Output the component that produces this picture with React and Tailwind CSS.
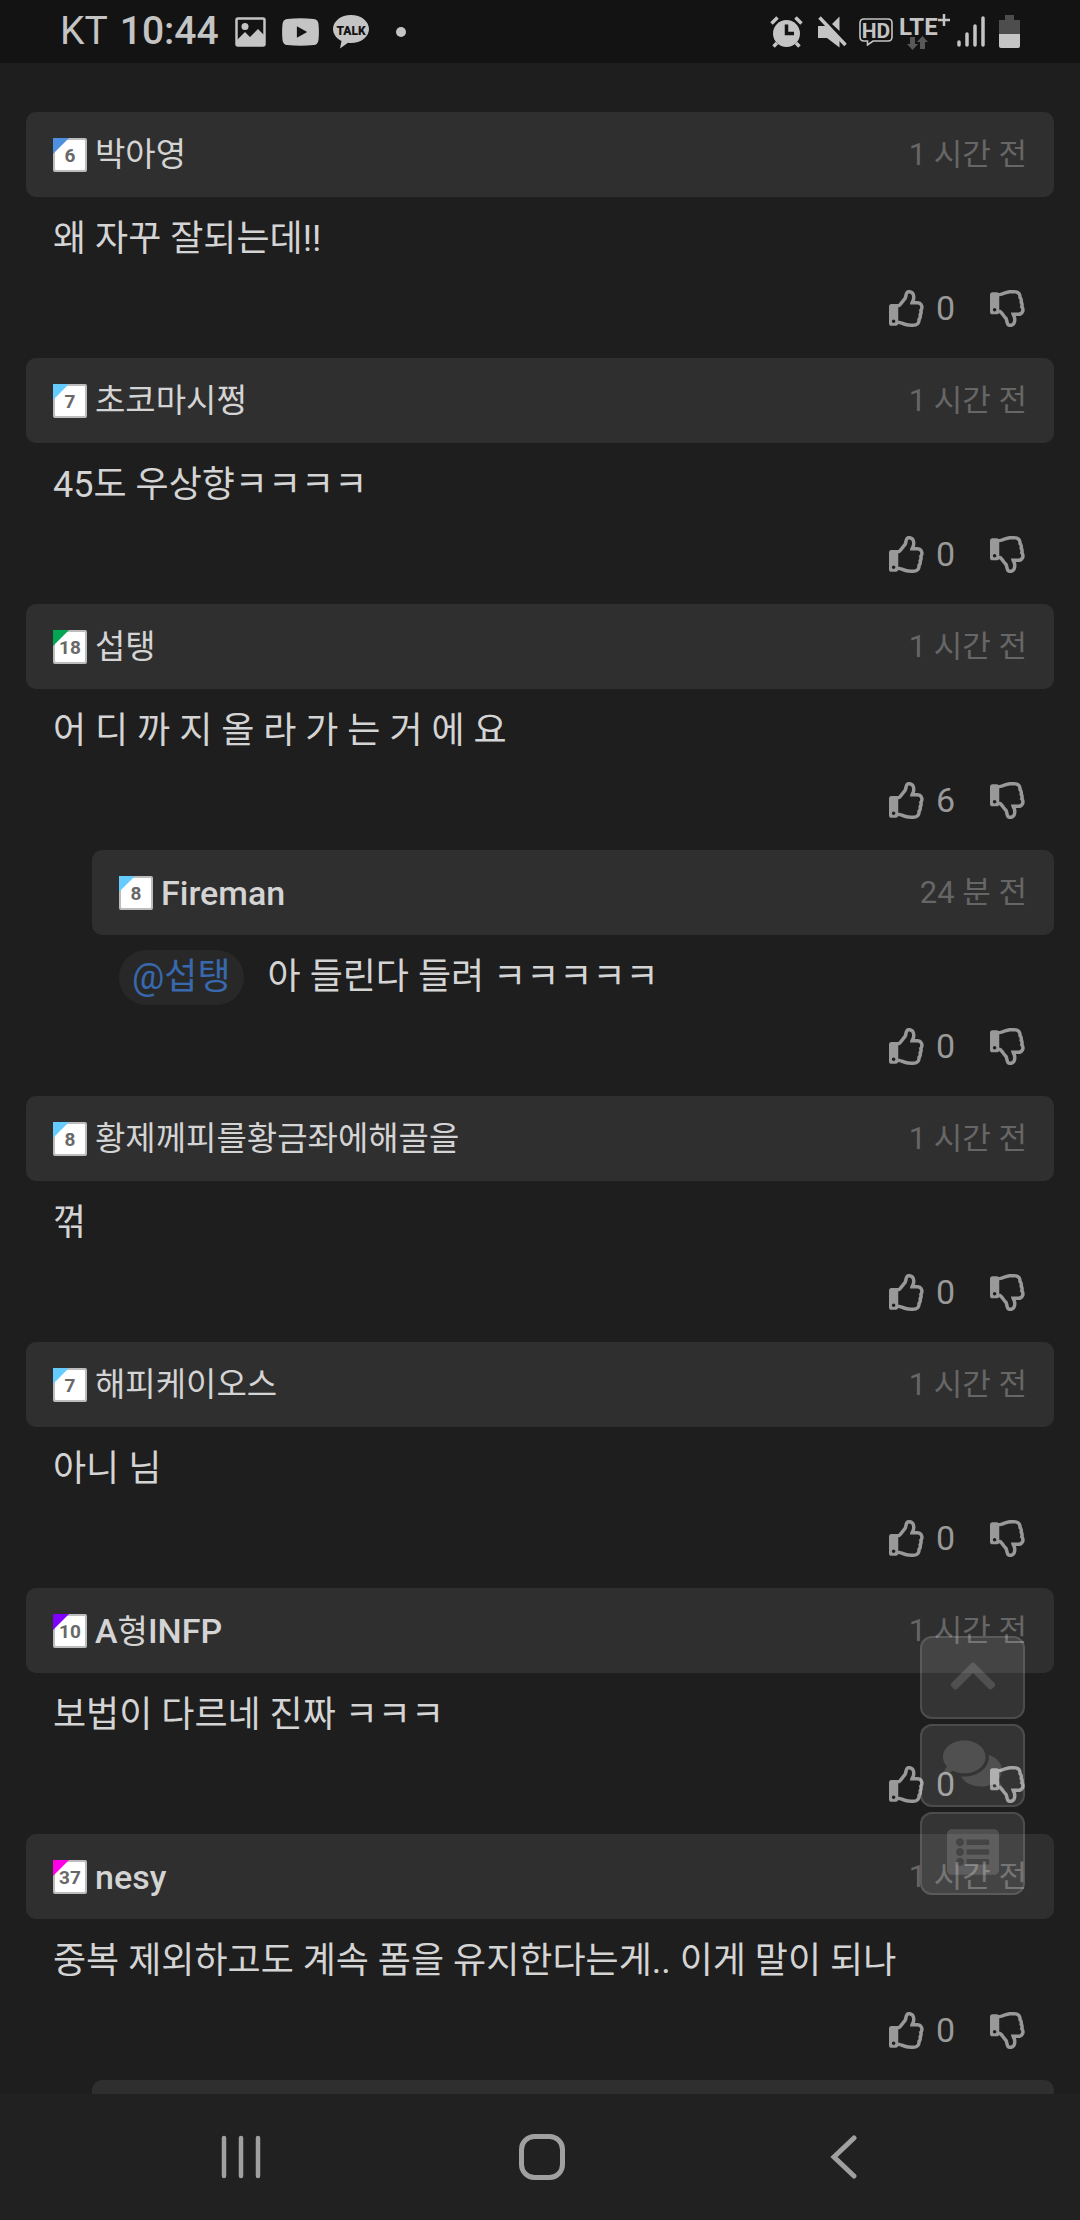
import React from "react";
import {
  FaChevronUp,
  FaComments,
  FaListAlt,
  FaRegThumbsDown,
  FaRegThumbsUp,
} from "react-icons/fa";

const comments = [
  { id: 1, level: 6, color: "#4f8fe0", author: "박아영", time: "1 시간 전", text: "왜 자꾸 잘되는데!!", likes: 0 },
  { id: 2, level: 7, color: "#66ccff", author: "초코마시쩡", time: "1 시간 전", text: "45도 우상향ㅋㅋㅋㅋ", likes: 0 },
  { id: 3, level: 18, color: "#00a651", author: "섭탱", time: "1 시간 전", text: "어 디 까 지 올 라 가 는 거 에 요", likes: 6 },
  { id: 4, level: 8, color: "#66ccff", author: "Fireman", time: "24 분 전", text: "아 들린다 들려 ㅋㅋㅋㅋㅋ", likes: 0, mention: "섭탱" },
  { id: 5, level: 8, color: "#66ccff", author: "황제께피를황금좌에해골을", time: "1 시간 전", text: "꺾", likes: 0 },
  { id: 6, level: 7, color: "#66ccff", author: "해피케이오스", time: "1 시간 전", text: "아니 님", likes: 0 },
  { id: 7, level: 10, color: "#8000ff", author: "A형INFP", time: "1 시간 전", text: "보법이 다르네 진짜 ㅋㅋㅋ", likes: 0 },
  { id: 8, level: 37, color: "#ff00e6", author: "nesy", time: "1 시간 전", text: "중복 제외하고도 계속 폼을 유지한다는게.. 이게 말이 되나", likes: 0 },
];

function StatusBar() {
  return (
    <header className="flex h-[63px] shrink-0 items-center justify-between bg-[#131313] px-[60px] text-[#c4c4c4]">
      <div className="flex items-center">
        <span className="text-[39px] leading-[63px]">KT</span>
        <span className="ml-3 text-[39px] leading-[63px] font-medium">10:44</span>
        <svg className="ml-4 h-[30px] w-[31px]" viewBox="0 0 31 30" fill="none">
          <rect x="1.5" y="1.5" width="28" height="27" rx="1.5" stroke="currentColor" strokeWidth="2.5" />
          <circle cx="10" cy="9.500" r="3.500" fill="currentColor" />
          <path d="M2 23l8-8 5 5 8-8 6 6v10H2z" fill="currentColor" />
        </svg>
        <svg className="ml-4 h-7 w-[37px]" viewBox="0 0 36 27">
          <path d="M5 .8Q18-.6 31 .8q4 .5 4.500 5 .8 7.700 0 15.400-.5 4.500-4.500 5-13 1.400-26 0-4-.5-4.500-5-.8-7.700 0-15.400Q1 1.300 5 .8z" fill="currentColor" />
          <path d="M14.500 8v11l10-5.500z" fill="#131313" />
        </svg>
        <svg className="ml-3.5 h-[34px] w-9" viewBox="0 0 36 34">
          <path d="M18 0c10 0 18 6.200 18 14s-8 14-18 14c-1 0-2 0-3-.2L7 33.500 8.500 26C3.500 23.500 0 19 0 14 0 6.200 8 0 18 0z" fill="currentColor" />
          <text x="18" y="19.500" textAnchor="middle" fontSize="12" fontWeight="900" fill="#131313">TALK</text>
        </svg>
        <span className="ml-[27px] size-2.5 rounded-full bg-[#c4c4c4]" />
      </div>

      <div className="flex items-center">
        <svg className="h-8 w-[33px]" viewBox="0 0 33 32" fill="none" stroke="currentColor">
          <circle cx="16.500" cy="17.500" r="13.500" fill="currentColor" stroke="none" />
          <path d="M1.500 7.500l6-6M31.500 7.500l-6-6M7 27l-3.500 3.500M26 27l3.500 3.500" strokeWidth="3.500" />
          <path d="M16.500 8.500v9H24" stroke="#131313" strokeWidth="3.500" />
        </svg>
        <svg className="ml-[15px] h-8 w-[29px]" viewBox="0 0 29 32">
          <path d="M21.500.5v14.500L14 8zM0 10h7.500L21.500 23v8.500L9 22H0z" fill="currentColor" />
          <path d="M1.500 1.500L27.500 29" stroke="currentColor" strokeWidth="3.500" />
          <path d="M4 .5L29 26" stroke="#131313" strokeWidth="1" />
        </svg>
        <svg className="ml-3 h-7 w-[34px]" viewBox="0 0 34 28">
          <path d="M5 1h24q4 0 4 4v14q0 4-4 4H14l-5.500 4v-4H5q-4 0-4-4V5q0-4 4-4z" fill="none" stroke="currentColor" strokeWidth="1.600" />
          <text x="17" y="19.500" textAnchor="middle" fontSize="21" fontWeight="700" fill="currentColor">HD</text>
        </svg>
        <svg className="ml-1.5 h-9 w-[52px]" viewBox="0 0 52 36">
          <text x="0" y="21" fontSize="24" fontWeight="700" fill="currentColor">LTE</text>
          <path d="M45 0v12M39 6h12" stroke="currentColor" strokeWidth="2.500" />
          <path d="M11 23h5v7h3l-5.500 6L8 30h3zM21 35h5v-7h3l-5.500-6-5.500 6h3z" fill="#585858" />
        </svg>
        <svg className="ml-1.5 h-[31px] w-7" viewBox="0 0 28 31" stroke="currentColor" strokeWidth="3.500" strokeLinecap="round">
          <path d="M2 26v3M10 18v11M18 10v19M26 2v27" />
        </svg>
        <svg className="ml-3.5 h-[33px] w-[21px]" viewBox="0 0 21 33">
          <path d="M6 0h9v5h6v14H0V5h6z" fill="#4d4d4d" />
          <path d="M0 19h21v12q0 2-2 2H2q-2 0-2-2z" fill="currentColor" />
        </svg>
      </div>
    </header>
  );
}

function LevelBadge({ level, color }) {
  return (
    <svg className="size-[34px] shrink-0" viewBox="0 0 34 34">
      <rect width="34" height="34" rx="2" fill="#bdbdbd" />
      <rect x="2" y="2" width="30" height="30" rx="1" fill="#fff" />
      <path d="M0 0h16L0 16z" fill={color} />
      <text x="17" y="24" textAnchor="middle" fontSize="19" fontWeight="700" fill="#686868">
        {level}
      </text>
    </svg>
  );
}

// Latin letters are set heavier than Hangul
function AuthorName({ name }) {
  return name
    .split(/([가-힣]+)/)
    .filter(Boolean)
    .map((part, i) => (
      <span key={i} className={/[가-힣]/.test(part) ? "text-[33px]" : "text-[34px] font-medium"}>
        {part}
      </span>
    ));
}

function Comment({ comment }) {
  const { level, color, author, time, text, likes, mention } = comment;

  return (
    <article className={mention ? "ml-[66px]" : ""}>
      <div className="flex h-[85px] items-center rounded-[10px] bg-[#2f2f2f] px-[27px] pt-px">
        <LevelBadge level={level} color={color} />
        <a href="#author" className="ml-2 text-[33px] leading-[50px] text-[#d4d4d4]">
          <AuthorName name={author} />
        </a>
        <time className="ml-auto text-[31px] leading-[50px] text-[#666666]">{time}</time>
      </div>

      <div className="mt-[15px] flex items-center px-[27px] text-[36px] leading-[55px] text-[#d4d4d4]">
        {mention && (
          <a href="#mention" className="mr-6 rounded-full bg-[#282828] px-[13px] text-[#3868ae]">
            @{mention}
          </a>
        )}
        <p>{text}</p>
      </div>

      <div className="mt-[15px] mb-6 flex h-[52px] items-center justify-end px-[27px] text-[#999999]">
        <button type="button" aria-label="추천" className="flex items-center gap-[10px] text-[34px] leading-[52px]">
          <FaRegThumbsUp className="size-[37px]" />
          {likes}
        </button>
        <button type="button" aria-label="비추천" className="ml-[35px]">
          <FaRegThumbsDown className="size-[37px]" />
        </button>
      </div>
    </article>
  );
}

function FloatingButton({ label, children }) {
  return (
    <button
      type="button"
      aria-label={label}
      className="flex h-[83px] w-[105px] items-center justify-center rounded-xl border-2 border-white/12 bg-white/10 pb-1 text-white/14"
    >
      {children}
    </button>
  );
}

function NavBar() {
  return (
    <nav className="grid h-[126px] shrink-0 grid-cols-3 place-items-center bg-[#212121] pr-[86px] pl-[90px] text-[#a0a0a0]">
      <button type="button" aria-label="최근 앱">
        <svg className="h-11 w-10" viewBox="0 0 40 44" stroke="currentColor" strokeWidth="4.500" strokeLinecap="round">
          <path d="M3 3v38M20 3v38M37 3v38" />
        </svg>
      </button>
      <button type="button" aria-label="홈">
        <svg className="size-12" viewBox="0 0 48 48" fill="none" stroke="currentColor" strokeWidth="5">
          <rect x="3.500" y="3.500" width="41" height="41" rx="13" />
        </svg>
      </button>
      <button type="button" aria-label="뒤로">
        <svg className="h-11 w-7" viewBox="0 0 28 44" fill="none" stroke="currentColor" strokeWidth="5" strokeLinecap="round">
          <path d="M25 3L5 22l20 19" />
        </svg>
      </button>
    </nav>
  );
}

function App() {
  return (
    <div className="flex h-screen flex-col overflow-hidden bg-[#1e1e1e] font-['Roboto','Noto_Sans_CJK_KR',sans-serif]">
      <StatusBar />
      <main className="relative min-h-0 flex-1 overflow-hidden">
        <div className="px-[26px] pt-[49px]">
          {comments.map((comment) => (
            <Comment key={comment.id} comment={comment} />
          ))}
          {/* next reply, cut off by the navigation bar */}
          <div className="ml-[66px] h-[85px] rounded-[10px] bg-[#2f2f2f]" />
        </div>

        <div className="absolute right-[55px] bottom-[199px] flex flex-col gap-[5px]">
          <FloatingButton label="맨 위로">
            <FaChevronUp className="size-[52px]" />
          </FloatingButton>
          <FloatingButton label="댓글">
            <FaComments className="size-[59px]" />
          </FloatingButton>
          <FloatingButton label="목록">
            <FaListAlt className="size-[52px]" />
          </FloatingButton>
        </div>
      </main>
      <NavBar />
    </div>
  );
}

export default App;
